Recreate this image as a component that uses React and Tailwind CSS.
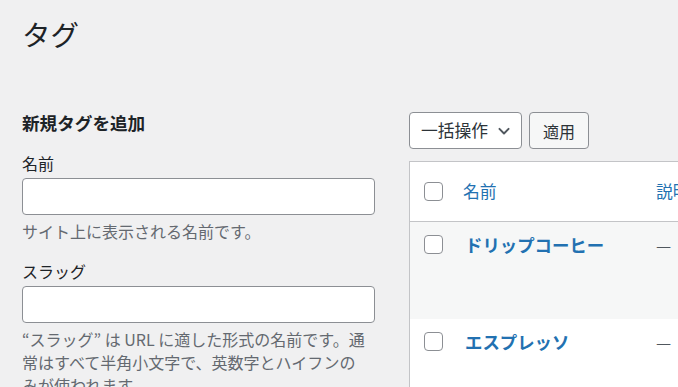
import React from "react";

const FONT = { fontFamily: '"Noto Sans CJK JP", "Noto Sans", sans-serif' };

function Checkbox() {
  return (
    <span className="block w-[19px] h-[19px] rounded-[4px] border border-[#8c8f94] bg-white" />
  );
}

function Field({ label, children }) {
  return (
    <div>
      <div className="text-[16px] leading-[22px] text-[#1d2327]">{label}</div>
      <div className="mt-[4px] h-[37px] w-[353px] rounded-[4px] border border-[#8c8f94] bg-white" />
      <p className="mt-[5px] text-[16px] leading-[23px] text-[#646970] whitespace-nowrap">
        {children}
      </p>
    </div>
  );
}

function TagRow({ name, alt }) {
  return (
    <div
      className={`flex h-[97px] items-start pt-[13px] ${alt ? "bg-[#f6f7f7]" : "bg-white"}`}
    >
      <div className="w-[53px] pl-[14px]">
        <Checkbox />
      </div>
      <div className="w-[193px] pl-[2px] text-[17.4px] font-bold leading-[19px] text-[#2271b1]">
        {name}
      </div>
      <div className="text-[17px] leading-[19px] text-[#50575e]">—</div>
    </div>
  );
}

export default function App() {
  return (
    <div
      className="w-[678px] h-[387px] overflow-hidden bg-[#f0f0f1] pl-[22px]"
      style={FONT}
    >
      <h1 className="pt-[14px] text-[28.5px] leading-[40px] font-normal text-[#1d2327]">
        タグ
      </h1>

      <div className="mt-[54px] flex gap-[32px]">
        {/* Left: add new tag */}
        <div className="w-[355px] shrink-0 pt-[3px]">
          <h2 className="text-[17.6px] font-bold leading-[24px] text-[#1d2327]">
            新規タグを追加
          </h2>
          <div className="mt-[17px]">
            <Field label="名前">サイト上に表示される名前です。</Field>
          </div>
          <div className="mt-[17px]">
            <Field label="スラッグ">
              “スラッグ” は URL に適した形式の名前です。通
              <br />
              常はすべて半角小文字で、英数字とハイフンの
              <br />
              みが使われます。
            </Field>
          </div>
        </div>

        {/* Right: tag list */}
        <div className="flex-1 pt-[4px]">
          <div className="flex gap-[7px]">
            <div className="flex h-[37px] w-[113px] items-center justify-between rounded-[4px] border border-[#8c8f94] bg-white pl-[11px] pr-[10px] text-[16.8px] text-[#2c3338]">
              <span>一括操作</span>
              <svg width="14" height="14" viewBox="0 0 20 20" fill="none">
                <path
                  d="M3.5 7l6.5 6.5 6.5-6.5"
                  stroke="#50575e"
                  strokeWidth="2.8"
                  strokeLinecap="round"
                  strokeLinejoin="round"
                />
              </svg>
            </div>
            <div className="flex h-[37px] w-[60px] items-center justify-center rounded-[4px] border border-[#8c8f94] bg-[#f6f7f7] text-[16px] text-[#2c3338]">
              適用
            </div>
          </div>

          <div className="mt-[12px] border-l border-t border-[#c3c4c7] bg-white">
            <div className="flex h-[60px] items-center border-b border-[#c3c4c7]">
              <div className="w-[53px] pl-[14px]">
                <Checkbox />
              </div>
              <div className="w-[193px] text-[16.8px] text-[#2271b1]">名前</div>
              <div className="whitespace-nowrap text-[16.8px] text-[#2271b1]">説明</div>
            </div>
            <TagRow name="ドリップコーヒー" alt />
            <TagRow name="エスプレッソ" />
          </div>
        </div>
      </div>
    </div>
  );
}
